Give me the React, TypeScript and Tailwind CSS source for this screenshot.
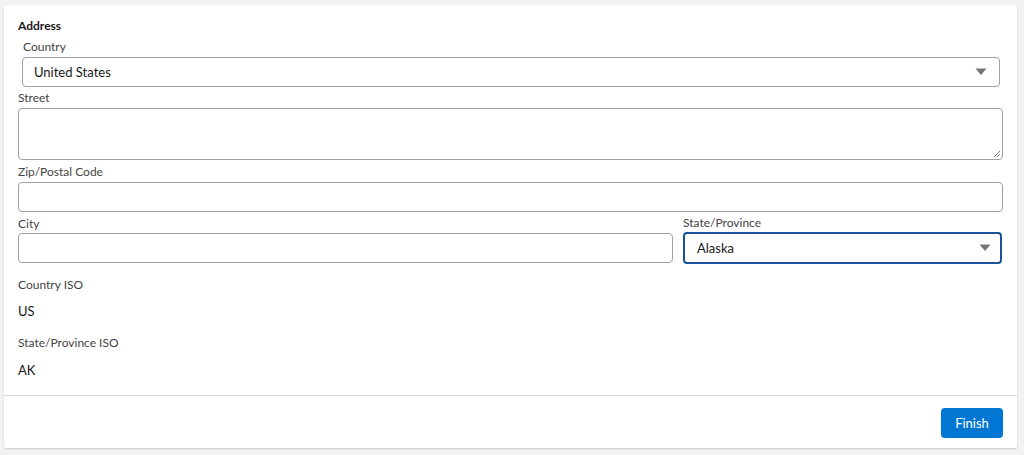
import React from "react";

function Caret() {
  return (
    <svg width="12" height="8" viewBox="0 0 12 8" className="shrink-0">
      <path d="M0.5 0.5 L11.5 0.5 L6 7 Z" fill="#747474" />
    </svg>
  );
}

function Label({ children, className = "" }: { children: React.ReactNode; className?: string }) {
  return <div className={`text-[12px] leading-[16px] text-[#444444] ${className}`}>{children}</div>;
}

export default function App() {
  return (
    <div
      className="w-[1024px] h-[455px] bg-[#f3f3f3] pt-[5px] pl-[4px]"
      style={{ fontFamily: '"Segoe UI", Lato, "Noto Sans", sans-serif' }}
    >
      <div className="w-[1013px] h-[443px] bg-white rounded-[2px] shadow-[0_1px_2px_rgba(0,0,0,0.18)] flex flex-col">
        <div className="h-[390px] pl-[14px] pr-[14px] pt-[13px]">
          <div className="text-[12px] leading-[16px] font-bold text-[#181818]">Address</div>

          <Label className="mt-[5px] pl-[5px]">Country</Label>
          <div className="mt-[2px] ml-[4px] mr-[3px] h-[30px] rounded-[4px] border border-[#a0a0a0] flex items-center justify-between pl-[11px] pr-[12px]">
            <span className="text-[13px] leading-[18px] text-[#181818]">United States</span>
            <Caret />
          </div>

          <Label className="mt-[3px]">Street</Label>
          <div className="mt-[2px] relative h-[52px] rounded-[4px] border border-[#a0a0a0]">
            <svg width="8" height="8" viewBox="0 0 8 8" className="absolute right-[1px] bottom-[1px]">
              <path d="M7 1 L1 7 M7 4 L4 7" stroke="#777" strokeWidth="1" />
            </svg>
          </div>

          <Label className="mt-[4px]">Zip/Postal Code</Label>
          <div className="mt-[2px] h-[30px] rounded-[4px] border border-[#a0a0a0]" />

          <div className="mt-[4px] flex gap-[10px]">
            <div className="w-[655px]">
              <Label>City</Label>
              <div className="mt-[1px] h-[30px] rounded-[4px] border border-[#a0a0a0]" />
            </div>
            <div className="w-[319px]">
              <Label className="-mt-[1px]">State/Province</Label>
              <div className="mt-[1px] h-[32px] rounded-[4px] border-2 border-[#1b5297] flex items-center justify-between pl-[12px] pr-[9px]">
                <span className="text-[13px] leading-[18px] text-[#181818]">Alaska</span>
                <Caret />
              </div>
            </div>
          </div>

          <Label className="mt-[13px]">Country ISO</Label>
          <div className="mt-[9px] text-[13px] leading-[18px] text-[#181818]">US</div>

          <Label className="mt-[15px]">State/Province ISO</Label>
          <div className="mt-[10px] text-[13px] leading-[18px] text-[#181818]">AK</div>
        </div>

        <div className="flex-1 border-t border-[#dddbda] flex items-start justify-end pr-[14px] pt-[12px]">
          <button className="h-[30px] w-[62px] rounded-[4px] bg-[#0176d3] text-white text-[13px] leading-[18px]">Finish</button>
        </div>
      </div>
    </div>
  );
}
